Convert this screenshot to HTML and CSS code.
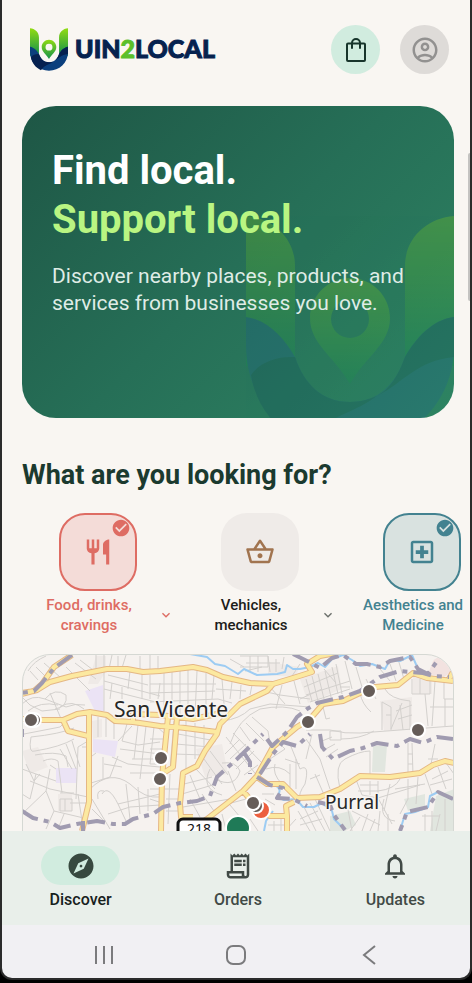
FILE: index.html
```html
<!DOCTYPE html>
<html lang="en">
<head>
<meta charset="utf-8">
<meta name="viewport" content="width=device-width, initial-scale=1">
<title>UIN2LOCAL</title>
<link rel="stylesheet" href="styles.css">
</head>
<body>
<svg class="defs" width="0" height="0" aria-hidden="true">
  <defs>
    <linearGradient id="leaf" gradientUnits="userSpaceOnUse" x1="0" y1="0" x2="0" y2="145">
      <stop offset="0" stop-color="#92dc12"/><stop offset="1" stop-color="#14924a"/>
    </linearGradient>
    <linearGradient id="pin" gradientUnits="userSpaceOnUse" x1="0" y1="60" x2="0" y2="168">
      <stop offset="0" stop-color="#92dc12"/><stop offset="1" stop-color="#14924a"/>
    </linearGradient>
    <symbol id="mark" viewBox="0 0 208 232">
      <path fill="url(#leaf)" d="M0 0C27 2 49 22 49 50V150H0ZM208 0C181 2 159 22 159 50V150H208Z"/>
      <path class="mark-deep" d="M0 101C22 104 38 122 49 141C58 168 76 186 104 186C132 186 150 168 159 141C170 122 186 104 208 101V130C208 190 160 232 104 232C48 232 0 190 0 130Z"/>
      <path class="mark-dark" d="M5 159C15 145 32 140 49 141C58 168 76 186 104 186C114 186 124 183 131 180C104 200 80 198 60 230C30 215 10 190 5 159ZM131 180C160 165 170 145 208 141V101C186 104 170 122 159 141C152 160 144 173 131 180Z"/>
      <path fill="url(#pin)" fill-rule="evenodd" d="M104 62C82 62 64 80 64 102C64 128 88 140 104 168C120 140 144 128 144 102C144 80 126 62 104 62ZM104 84A19 19 0 1 1 104 122A19 19 0 1 1 104 84Z"/>
    </symbol>
    <symbol id="check" viewBox="0 0 24 24"><path d="M12 2C6.48 2 2 6.48 2 12s4.480 10 10 10 10-4.480 10-10S17.520 2 12 2zm-2 15l-5-5 1.410-1.410L10 14.170l7.590-7.590L19 8l-9 9z"/></symbol>
    <symbol id="more" viewBox="0 0 24 24"><path d="M16.590 8.590L12 13.170 7.410 8.590 6 10l6 6 6-6z"/></symbol>
  </defs>
</svg>

<div class="phone">
  <div class="app">
    <header class="topbar">
      <a class="brand" href="#" aria-label="UIN2LOCAL">
        <svg class="brand-mark" aria-hidden="true"><use href="#mark"/></svg>
        <span class="brand-name">UIN<span class="brand-two">2</span>LOCAL</span>
      </a>
      <div class="actions">
        <button class="round bag" type="button" aria-label="Bag">
          <svg width="20" height="24" viewBox="0 0 20 24" fill="none" stroke="currentColor" stroke-width="2" stroke-linejoin="round" stroke-linecap="round"><path d="M2 5.500H18Q19 5.500 19 6.500V22Q19 23 18 23H2Q1 23 1 22V6.500Q1 5.500 2 5.500ZM6 10V5A4 4 0 0 1 14 5V10"/></svg>
        </button>
        <button class="round account" type="button" aria-label="Account">
          <svg class="icon-30" viewBox="0 0 24 24"><path d="M12 2C6.480 2 2 6.480 2 12s4.480 10 10 10 10-4.480 10-10S17.520 2 12 2zM7.350 18.500C8.660 17.560 10.260 17 12 17s3.340.560 4.650 1.500C15.340 19.440 13.740 20 12 20s-3.340-.560-4.650-1.500zm10.790-1.380C16.450 15.800 14.320 15 12 15s-4.450.800-6.140 2.120C4.700 15.730 4 13.950 4 12c0-4.420 3.580-8 8-8s8 3.580 8 8c0 1.950-.700 3.730-1.860 5.120zM12 6c-1.930 0-3.500 1.570-3.500 3.500S10.070 13 12 13s3.500-1.570 3.500-3.500S13.930 6 12 6zm0 5c-.830 0-1.500-.670-1.500-1.500S11.170 8 12 8s1.500.670 1.500 1.500S12.830 11 12 11z"/></svg>
        </button>
      </div>
    </header>

    <main class="content">
      <section class="hero">
        <svg class="hero-mark" aria-hidden="true"><use href="#mark"/></svg>
        <h1 class="hero-title">Find local.<br><span class="hero-accent">Support local.</span></h1>
        <p class="hero-text">Discover nearby places, products, and services from businesses you love.</p>
      </section>

      <h2 class="section-title">What are you looking for?</h2>

      <div class="categories">
        <div class="category food">
          <button class="tile selected" type="button" aria-pressed="true" aria-labelledby="c1">
            <svg class="icon-30" viewBox="0 0 24 24"><path d="M11 9H9V2H7v7H5V2H3v7c0 2.120 1.660 3.840 3.750 3.970V22h2.500v-9.030C11.340 12.840 13 11.120 13 9V2h-2v7zm5-3v8h2.500v8H21V2c-2.760 0-5 2.240-5 4z"/></svg>
            <svg class="tick"><use href="#check"/></svg>
          </button>
          <div class="caption">
            <span class="label" id="c1">Food, drinks, cravings</span>
            <button class="expand" type="button" aria-label="Show food subcategories"><svg class="icon-16"><use href="#more"/></svg></button>
          </div>
        </div>
        <div class="category vehicles">
          <button class="tile" type="button" aria-pressed="false" aria-labelledby="c2">
            <svg class="icon-30" viewBox="0 0 24 24"><path d="M22 9h-4.790l-4.380-6.560c-.190-.280-.510-.420-.830-.420s-.640.140-.830.430L6.790 9H2c-.550 0-1 .450-1 1 0 .090.010.180.040.270l2.540 9.270c.230.840 1 1.460 1.920 1.460h13c.920 0 1.690-.620 1.930-1.460l2.540-9.270L23 10c0-.550-.450-1-1-1zM12 4.800L14.800 9H9.200L12 4.800zM18.500 19l-12.990.010L3.310 11H20.700l-2.200 8zM12 13c-1.100 0-2 .900-2 2s.900 2 2 2 2-.900 2-2-.900-2-2-2z"/></svg>
          </button>
          <div class="caption">
            <span class="label" id="c2">Vehicles, mechanics</span>
            <button class="expand" type="button" aria-label="Show vehicle subcategories"><svg class="icon-16"><use href="#more"/></svg></button>
          </div>
        </div>
        <div class="category care">
          <button class="tile selected" type="button" aria-pressed="true" aria-labelledby="c3">
            <svg class="icon-30" viewBox="0 0 24 24"><path d="M19 3H5c-1.100 0-1.990.900-1.990 2L3 19c0 1.100.900 2 2 2h14c1.100 0 2-.900 2-2V5c0-1.100-.900-2-2-2zm0 16H5V5h14v14zm-8.500-2h3v-3.500H17v-3h-3.500V7h-3v3.500H7v3h3.500z"/></svg>
            <svg class="tick"><use href="#check"/></svg>
          </button>
          <div class="caption">
            <span class="label" id="c3">Aesthetics and Medicine</span>
            <button class="expand" type="button" aria-label="Show care subcategories"><svg class="icon-16"><use href="#more"/></svg></button>
          </div>
        </div>
      </div>

      <section class="map" aria-label="Map of nearby places">
        <svg class="map-canvas" viewBox="23 656 430 239" preserveAspectRatio="xMidYMin slice">
          <!-- blocks -->
          <g class="blocks">
            <path d="M96 657H106V672L98 685H88ZM92 722L102 720V738L93 740ZM58 795H72V812H58ZM22 752L38 748 48 768 30 775ZM300 680L338 667 342 690 308 704ZM380 702L412 698V730L384 732ZM413 676H432V695H413ZM196 750L222 745 228 775 205 778ZM268 663L300 668 295 678 268 676Z"/>
          </g>
          <g class="green"><path d="M373 747H387L385 773H372ZM330 817L350 812 356 826 345 832H330ZM436 797L454 790V832H430ZM404 800L425 795V807L408 812Z"/></g>
          <path class="clinic" d="M433 662Q440 654 450 662L453 672 444 678 428 675Z"/>
          <g class="school"><path d="M85 692L103 686 104 712 95 712ZM93 740L118 742 115 758 93 753ZM56 769H77V784H56Z"/></g>
          <!-- side streets -->
          <g class="street">
            <path d="M28 672Q34 662 46 657M30 672L38 681M36 668L50 682M44 664L60 678M66 668L90 692M75 664L96 680M80 661L97 674M60 678L82 673M104 656V712M96 656V670M112 656L109 670M118 657V670M126 656L122 669M140 657V672M150 656V672M158 657V672"/>
            <path d="M104 682L160 697M104 690L160 704M130 672L128 690M142 674V700M112 684L110 700M122 688V700M150 676V700M108 676L148 686"/>
            <path d="M22 705Q32 695 45 700T66 708M28 712Q40 702 58 706M45 700Q55 688 66 696Q68 708 55 710M50 694L62 722M66 708Q75 704 85 706M22 698L30 706 42 712 60 710M24 735L60 728 68 720M60 708Q72 700 84 710"/>
            <path d="M31 738Q60 735 74 729M31 738Q28 755 35 752Q60 748 74 740M35 756Q55 752 66 757L68 768M43 762Q52 758 58 762L62 794M50 766L56 770M66 745L76 770M60 750L72 770M72 742L80 768M88 742L78 748 76 800M82 748L88 748"/>
            <path d="M22 770L36 775 30 800 22 795M30 782L50 790 88 798M50 770L46 792 22 815M26 765L34 782 40 775M36 775L56 782M60 794H74M60 800H72V812H60ZM65 800V812M46 792L54 812 88 820M54 812L46 830M64 815L58 830M78 795L82 822M88 804H70"/>
            <path d="M98 718V738M106 718V738M114 723V740M118 742L132 727M127 725L122 742 138 746 160 743M138 726L134 760M146 727L140 780M154 728L150 765M96 754L88 760M103 758V780M112 758L128 765 160 768M118 757L110 778 88 785M90 790Q110 770 130 785Q145 800 160 798M102 795Q108 785 118 805L126 822M98 800Q96 790 104 792M126 785L130 820M138 788L140 815M148 790V812M118 805L160 795M92 810L104 822M108 815L130 808 160 806M92 800L110 830M132 760H156M130 774H156M120 750L160 755M104 765L122 768"/>
            <path d="M164 674V714M172 672V714M180 671V716M188 670V716M197 672L195 716M206 674V712M150 685H216M150 694L215 692M150 703L218 700M214 676L212 700M222 680L224 705M232 683L230 700M241 686L240 700M252 686L250 696M216 690L246 692M218 700L232 704M160 684L158 700"/>
            <path d="M178 735L216 742M176 745L210 748M174 755L204 756M186 722V770M195 724V760M204 726V752M165 740H150M165 750H150M164 765H150M165 735L155 726M150 790H162M150 800L162 804M170 775L168 825M165 790H182M166 800H180M166 812H180M174 722L170 770"/>
            <path d="M230 745Q238 720 260 710Q285 705 300 712M222 722Q240 720 250 710L270 705 310 708M226 738L258 778M233 734L262 764M240 728L250 742M246 724L264 742M252 718L268 732 270 744M225 755L240 740M230 760L246 745M236 770L254 752M244 776L258 766M210 752L228 776M204 760L222 785M196 770L215 790M190 776L200 800M184 785L212 778M182 795L216 785M183 808L230 800M190 800L200 818M202 795L214 812M215 780Q235 790 240 772Q236 762 222 764M228 772L236 792M210 770Q200 790 222 796"/>
            <path d="M240 657H268V668H240M250 657V672M258 657V673M246 664H280M268 657L270 673M276 660V673M284 658L282 670M245 672L262 668M230 660L244 668M300 665L290 680M262 692L280 696 310 700M270 688L285 705M282 686L276 710M294 682L300 705"/>
            <path d="M306 680L312 702M312 677L318 702M318 675L324 700M325 672L331 698M332 668L338 695M304 688L338 674M306 696L350 682M310 703L350 690M336 665L342 695M324 670L336 684M300 700L322 690M340 688H350M323 708L326 720 330 719M360 694Q362 705 371 713"/>
            <path d="M306 731H330Q345 735 360 734L453 727M330 732H341V741H330ZM341 740Q360 740 374 732M382 703V731M382 703L391 708V731M386 716H391M385 690Q390 700 410 702V731M396 712L412 706M398 720L412 716M400 706L403 731M412 680V695H430V678M420 680V695M435 682L432 727M444 684V700H454M430 708H454M445 700V727M425 695L428 727M391 730L402 704M366 680L376 700M380 670L390 682M356 668L362 688M345 662L352 690M390 665L396 682M398 660L404 680"/>
            <path d="M306 740L320 760 330 790M312 735L306 760M322 752L335 745M326 758L338 750M322 742L332 738M340 790Q334 765 345 760Q360 752 370 752V778M355 778L362 796 378 799V782M360 786H378M358 792H378M370 782V796M378 792Q395 790 400 780M408 744V778M412 744L413 776M408 755H413M408 765H413M435 745L430 770M428 760H438M408 780V800L400 815M418 778L416 805M390 785L384 812M384 800Q378 820 395 822M378 799L392 825M425 775L432 795M438 768L446 790M446 764L454 775M432 780L448 772M430 786L452 780M378 799L420 786M395 790L425 785"/>
            <path d="M300 770Q310 764 305 785 298 795 300 800M300 765L285 760M290 745L300 770M270 760L285 750 280 745M266 770Q280 765 290 775M275 765Q272 775 282 785M290 765V788M296 760V790M315 775L325 798M310 780L320 776M298 812L310 832M304 808L316 832M310 804L325 832M300 820L318 812M300 826L322 820M315 800L330 832M346 800L352 832M352 812L380 826M360 818L350 832M368 815L362 832M375 820L370 832M380 812L378 832M388 815V832M425 815V832M432 812V832M440 815L436 832M422 817H440M445 800V832M296 820L285 832M274 822V832M281 820V832M268 826H286M250 820L258 832M222 815L226 831M230 806L240 818M212 816L224 806 246 800M265 800L275 806M262 795L274 795"/>
          </g>
          <!-- rivers -->
          <g class="river"><path d="M190 655L207 658 215 665 225 667 238 675 244 670 257 676 277 675 285 673 287 666 293 670 300 670 310 668 318 664 325 668 332 660 343 656 352 661 360 667 372 665 385 670 390 661 400 662 412 656 418 670 428 675M275 786Q283 790 277 798L284 801 296 800 303 808 314 808 322 804 332 812 334 820 344 830M453 800L438 793 430 797 428 808 415 813 405 815 400 832M273 812L266 822 264 832"/></g>
          <!-- main roads -->
          <g class="road-edge">
            <path id="road-lines" d="M22 695L37 691 50 683 72 677 107 670 127 670 143 673 160 672 193 668 207 671 223 678 250 684 273 685 293 679 312 673 307 665 320 657 336 654M22 720L43 721 63 721 77 715 90 713 107 716 115 722 133 723 160 727 177 728 217 733M63 721L68 732 88 737M89 713V803L82 832M133 723V715L160 716 193 720 217 715M168 718L162 778 161 832M177 719L173 768 165 773M273 685L267 692 240 705 220 725 217 735 205 752 197 767 183 774 180 805 181 818H193M193 830L207 820 243 792 257 777 273 748 297 728 310 720 323 705 343 702 360 694 375 688 398 686 413 674 427 679 453 682M257 778L267 785H283L297 799 320 798 340 790 360 777 390 778 420 774 433 766 445 762 454 764M243 792L260 812 270 817H287L286 807 294 803M287 817V832M449 680L453 673M22 694L34 692 42 685 54 668 72 656"/>
          </g>
          <use class="road-fill" href="#road-lines"/>
          <!-- district limits -->
          <g class="limit"><path d="M72 656L54 669 42 684 34 692 22 694M22 812L33 819 50 823 60 829 77 825 97 822 113 825 125 825 133 820 153 815 163 808 180 804 197 802 210 797 217 778 237 760 263 735M243 752L250 763 250 775M260 775L273 755 283 743 297 747 310 735M267 740L272 747 287 733 297 718 307 710 317 704 343 698 360 692 380 678 400 672 423 674 433 677 449 678M257 778L270 786 283 789 277 799 293 800 307 807M318 803L330 806 334 816 345 831M293 655L307 662 320 669 332 659 343 656 356 665 367 665 380 668 390 662 410 658 418 670 428 675 440 658M320 735L322 748 333 760 350 752 363 749 377 744 397 747 410 740 423 744 437 738 453 740M453 800L438 793 428 808 407 813 400 832M22 730V738M83 832V822"/></g>
          <!-- place names -->
          <g class="place"><text x="114" y="718" font-size="21">San Vicente</text><text x="325" y="810" font-size="19">Purral</text></g>
          <!-- route shield -->
          <g class="shield"><rect x="178" y="820" width="42" height="26" rx="5"/><text x="199" y="835">218</text></g>
          <!-- pins -->
          <g class="pins"><circle cx="34" cy="721" r="7"/><circle cx="31" cy="721" r="7"/><circle cx="161" cy="759" r="7"/><circle cx="160" cy="780" r="7"/><circle class="hot" cx="261" cy="811" r="9"/><circle cx="256" cy="807" r="7"/><circle cx="253" cy="804" r="7"/><circle cx="308" cy="723" r="7"/><circle cx="369" cy="692" r="7"/><circle cx="418" cy="731" r="7"/><circle class="here" cx="238" cy="829" r="12"/></g>
        </svg>
      </section>
    </main>

    <nav class="tabs" aria-label="Main">
      <a class="tab active" href="#" aria-current="page">
        <span class="tab-icon"><svg class="icon-30" viewBox="0 0 24 24"><path d="M12 10.900c-.610 0-1.100.490-1.100 1.100s.490 1.100 1.100 1.100c.610 0 1.100-.490 1.100-1.100s-.490-1.100-1.100-1.100zM12 2C6.480 2 2 6.480 2 12s4.480 10 10 10 10-4.480 10-10S17.520 2 12 2zm2.190 12.190L6 18l3.810-8.190L18 6l-3.810 8.190z"/></svg></span>
        <span>Discover</span>
      </a>
      <a class="tab" href="#">
        <span class="tab-icon"><svg class="icon-30" viewBox="0 0 24 24"><path d="M19.500 3.500L18 2l-1.500 1.500L15 2l-1.500 1.500L12 2l-1.500 1.500L9 2 7.500 3.500 6 2v14H3v3c0 1.660 1.340 3 3 3h12c1.660 0 3-1.340 3-3V2l-1.500 1.500zM15 20H6c-.550 0-1-.450-1-1v-1h10v2zm4-1c0 .550-.450 1-1 1s-1-.450-1-1v-3H8V5h11v14zM9 7h6v2H9zM16 7h2v2h-2zM9 10h6v2H9zM16 10h2v2h-2z"/></svg></span>
        <span>Orders</span>
      </a>
      <a class="tab" href="#">
        <span class="tab-icon"><svg class="icon-30" viewBox="0 0 24 24"><path d="M12 22c1.100 0 2-.900 2-2h-4c0 1.100.900 2 2 2zm6-6v-5c0-3.070-1.630-5.640-4.500-6.320V4c0-.830-.670-1.500-1.500-1.500s-1.500.670-1.500 1.500v.680C7.640 5.360 6 7.920 6 11v5l-2 2v1h16v-1l-2-2zm-2 1H8v-6c0-2.480 1.510-4.500 4-4.500s4 2.020 4 4.500v6z"/></svg></span>
        <span>Updates</span>
      </a>
    </nav>
  </div>

  <div class="system">
    <button type="button" aria-label="Recent apps"><svg width="20" height="20" viewBox="0 0 20 20"><path d="M2 1V19M10 1V19M18 1V19"/></svg></button>
    <button type="button" aria-label="Home"><svg width="20" height="20" viewBox="0 0 20 20"><rect x="1" y="1" width="18" height="18" rx="6"/></svg></button>
    <button type="button" aria-label="Back"><svg width="20" height="20" viewBox="0 0 20 20"><path d="M17 1L6 10 17 19"/></svg></button>
  </div>
  <span class="edge-handle"></span>
</div>
</body>
</html>
```
FILE: styles.css
```css
* { box-sizing: border-box; }

body {
  margin: 0;
  background: #000;
  color: #1b3a2f;
  font-family: Roboto, "Liberation Sans", sans-serif;
}

h1, h2, p { margin: 0; }
a { color: inherit; text-decoration: none; }
button {
  padding: 0;
  border: 0;
  background: none;
  color: inherit;
  font: inherit;
}
svg { display: block; }
.icon-30 { width: 30px; height: 30px; fill: currentColor; }
.icon-16 { width: 16px; height: 16px; fill: currentColor; }
.defs { position: absolute; }

.phone {
  position: relative;
  display: flex;
  flex-direction: column;
  height: calc(100vh - 3px);
  overflow: hidden;
  border: 2px solid #2b2b2b;
  border-top: 0;
  border-radius: 0 0 12px 12px;
  background: #f1f0f3;
}

.app {
  display: flex;
  flex: 1;
  flex-direction: column;
  min-height: 0;
  margin-right: -4px;
  background: #f9f6f2;
}

/* Top bar */
.topbar {
  display: flex;
  align-items: center;
  justify-content: space-between;
  padding: 25px 25px 32px 28px;
}
.brand { display: flex; align-items: center; gap: 7px; }
.brand-mark { width: 38px; height: 43px; }
.mark-deep { fill: var(--deep, #0b3f7d); }
.mark-dark { fill: var(--dark, #062150); }
.brand-name {
  padding-bottom: 4px;
  color: #06224f;
  font: 900 25px/28px Lato, sans-serif;
  -webkit-text-stroke: 1px currentColor;
}
.brand-two { color: #5cbf2a; }
.actions { display: flex; gap: 20px; }
.round {
  display: grid;
  place-items: center;
  width: 49px;
  height: 49px;
  border-radius: 50%;
}
.bag { background: #d1ecdf; color: #17352b; }
.account { background: #dedbd8; color: #929190; }

.content { flex: 1; min-height: 0; overflow: hidden; }

/* Hero */
.hero {
  position: relative;
  min-height: 312px;
  margin: 0 20px;
  padding: 40px 30px;
  overflow: hidden;
  border-radius: 34px;
  background: linear-gradient(135deg, #1e5645 0%, #266f57 50%, #2e8463 100%);
}
.hero-mark {
  --deep: #1b5a92;
  --dark: #10485e;
  position: absolute;
  top: 110px;
  right: 0;
  width: 208px;
  height: 232px;
  opacity: .24;
}
.hero-title {
  position: relative;
  color: #fff;
  font-size: 40px;
  font-weight: 700;
  line-height: 49px;
}
.hero-accent { color: #b9f582; }
.hero-text {
  position: relative;
  margin-top: 19px;
  color: #dfece6;
  font-size: 21px;
  line-height: 27px;
}

.section-title {
  margin: 41px 20px 22px;
  font-size: 27px;
  font-weight: 700;
  line-height: 32px;
}

/* Categories */
.categories { display: flex; gap: 10px; padding: 0 20px; }
.category {
  display: flex;
  flex: 0 0 152px;
  flex-direction: column;
  align-items: center;
  gap: 4px;
}
.tile {
  position: relative;
  display: grid;
  place-items: center;
  width: 78px;
  height: 78px;
  border-radius: 26px;
  background: #efebe8;
}
.tile.selected { border: 2px solid currentColor; }
.tick {
  position: absolute;
  top: 3px;
  right: 4px;
  width: 20px;
  height: 20px;
  fill: currentColor;
}
.food { color: #de6c63; }
.food .tile { background: #f4dcd8; }
.care { color: #438290; }
.care .tile { background: #d9e2e0; }
.vehicles .tile { color: #a1744f; }
.vehicles .label { color: #1c1c1a; }
.vehicles .expand { color: #6b6f6b; }
.caption { display: flex; align-items: center; width: 100%; }
.label {
  flex: 1;
  padding: 0 14px;
  font-size: 15px;
  font-weight: 500;
  line-height: 20px;
  text-align: center;
}
.expand { display: grid; justify-items: end; width: 18px; }

/* Map */
.map {
  margin: 19px 20px 0;
  overflow: hidden;
  border: 1px solid #d5d8d3;
  border-radius: 28px;
  background: #f6f2ef;
}
.map-canvas { width: 100%; height: auto; }
.blocks { fill: #efeae7; }
.green { fill: #e1e6df; }
.clinic { fill: #f2e2e0; }
.school { fill: #ebe3f5; }
.street { fill: none; stroke: #d3d0cd; stroke-width: 1; }
.river { fill: none; stroke: #9dccf3; stroke-width: 2; stroke-linejoin: round; }
.road-edge { fill: none; stroke: #e5b784; stroke-width: 6; stroke-linejoin: round; }
/* the inner stroke is set on the reused path, over its wider casing */
.road-fill { fill: none; stroke: #fce9a0; stroke-width: 4; stroke-linejoin: round; }
.limit { fill: none; stroke: #a09bb0; stroke-width: 4; stroke-dasharray: 18 6 5 6; stroke-linejoin: round; }
.place {
  fill: #262626;
  stroke: #f8f5f2;
  stroke-width: 3;
  stroke-linejoin: round;
  paint-order: stroke;
  font-family: "Noto Sans", sans-serif;
}
.shield rect { fill: #fff; stroke: #111; stroke-width: 3; }
.shield text { fill: #111; font: 14px "Noto Sans", sans-serif; text-anchor: middle; }
.pins { fill: #655c58; stroke: #fff; stroke-width: 2; }
.hot { fill: #ec6040; }
.here { fill: #1f7a57; }

/* Bottom tabs */
.tabs {
  display: grid;
  grid-template-columns: repeat(3, 1fr);
  padding: 15px 0;
  background: #e9efea;
}
.tab {
  display: flex;
  flex-direction: column;
  align-items: center;
  gap: 5px;
  color: #414a46;
  font-size: 16px;
  font-weight: 500;
  line-height: 20px;
}
.tab-icon {
  display: grid;
  place-items: center;
  width: 79px;
  height: 39px;
  border-radius: 20px;
}
.tab.active { color: #17211d; }
.active .tab-icon { background: #d1ecdf; color: #37493f; }

/* System navigation */
.system {
  display: flex;
  justify-content: center;
  gap: 112px;
  padding: 20px 0 13px;
}
.system svg { fill: none; stroke: #7b7b7d; stroke-width: 2; }

.edge-handle {
  position: absolute;
  top: 153px;
  right: 0;
  width: 2px;
  height: 148px;
  border-radius: 2px 0 0 2px;
  background: #c4c3c1;
}
```
